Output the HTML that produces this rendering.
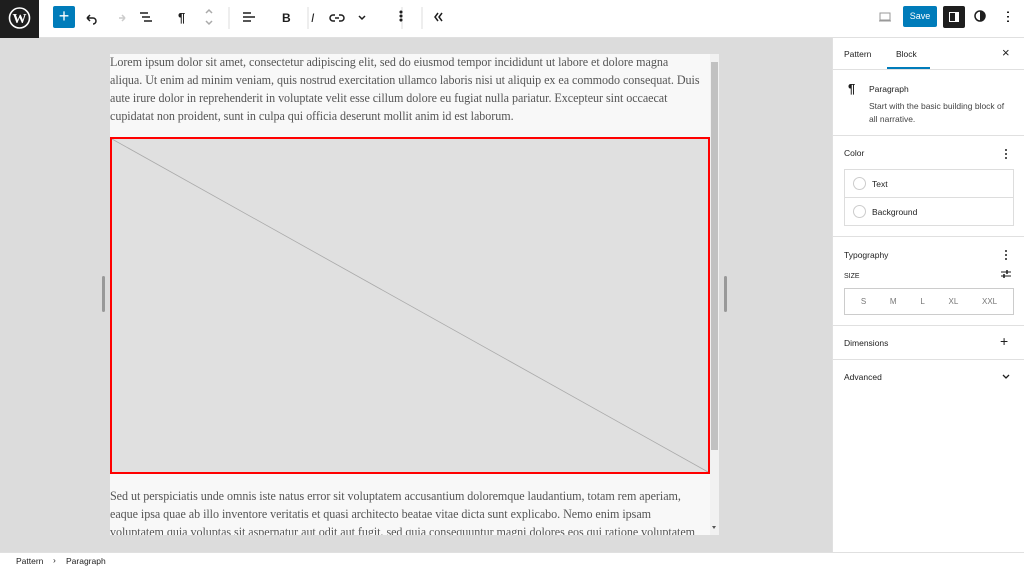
<!DOCTYPE html>
<html><head><style>
*{box-sizing:border-box;margin:0;padding:0}
body{width:1024px;height:568px;overflow:hidden;font-family:"Liberation Sans",sans-serif;background:#fff;position:relative;color:#1e1e1e}
.abs{position:absolute}
.top{left:0;top:0;width:1024px;height:38px;background:#fff;border-bottom:1px solid #e0e0e0}
.logo{left:0;top:0;width:39px;height:38px;background:#1e1e1e}
.canvas{left:0;top:38px;width:832px;height:514px;background:#dcdcdc}
.frame{left:110px;top:54px;width:609px;height:481px;background:#f8f8f8;overflow:hidden}
.txt{font-family:"Liberation Serif",serif;font-size:12.1px;line-height:18px;color:#555;width:600px;position:absolute;left:0;white-space:nowrap;letter-spacing:-0.05px}
.side{left:832px;top:38px;width:192px;height:514px;background:#fff;border-left:1px solid #e0e0e0}
.foot{left:0;top:552px;width:1024px;height:16px;background:#fff;border-top:1px solid #e0e0e0;font-size:8.5px;color:#1e1e1e}
.s{font-size:8.5px;color:#1e1e1e}
.hr{height:1px;background:#e0e0e0;left:0;width:192px}
</style></head><body>
<div class="abs top"></div>
<div class="abs logo"><svg width="39" height="38"><circle cx="19.5" cy="18" r="10" fill="none" stroke="#fff" stroke-width="1.6"/><text x="19.5" y="23" font-family="Liberation Serif" font-size="14" font-weight="bold" fill="#fff" text-anchor="middle">W</text></svg></div>
<div class="abs" style="left:53px;top:6px;width:22px;height:22px;background:#007cba;border-radius:2px;color:#fff;font-size:18px;line-height:21px;text-align:center">+</div>
<svg class="abs" style="left:80px;top:6px" width="400" height="24" fill="none" stroke="#1e1e1e" stroke-width="1.5">
<path d="M7 12h6a3 3 0 0 1 0 6M7 12l3-3M7 12l3 3"/>
<path d="M45 12h-6M45 12l-3-3M45 12l-3 3" stroke="#ccc"/>
<path d="M60 7h8M62 11h8M64 15h8"/>
<text x="98" y="16" font-size="13" font-weight="bold" fill="#1e1e1e" stroke="none">¶</text>
<path d="M126 7l3-3 3 3M126 15l3 3 3-3" stroke="#aaa"/>
<path d="M149 1v22M228 1v22M322 1v22M342 1v22" stroke="#ddd" stroke-width="1"/>
<path d="M163 7h8M163 11h12M163 15h8"/>
<text x="202" y="16" font-size="12" font-weight="bold" fill="#1e1e1e" stroke="none">B</text>
<text x="231" y="16" font-size="12" font-style="italic" fill="#1e1e1e" stroke="none">I</text>
<path d="M255 9h-2a3 3 0 0 0 0 6h2M259 9h2a3 3 0 0 1 0 6h-2M255 12h4"/>
<path d="M279 10l3 3 3-3"/>
<circle cx="321" cy="6" r=".8" fill="#1e1e1e"/><circle cx="321" cy="10" r=".8" fill="#1e1e1e"/><circle cx="321" cy="14" r=".8" fill="#1e1e1e"/>
<path d="M358 7l-3 4 3 4M362 7l-3 4 3 4"/>
</svg>
<svg class="abs" style="left:878px;top:10px" width="14" height="14" fill="none" stroke="#999" stroke-width="1"><rect x="2" y="3" width="10" height="7"/><path d="M1 11h12"/></svg>
<div class="abs" style="left:903px;top:6px;width:34px;height:21px;background:#007cba;color:#fff;font-size:9px;line-height:21px;text-align:center;border-radius:2px">Save</div>
<div class="abs" style="left:943px;top:6px;width:22px;height:22px;background:#1e1e1e;border-radius:2px"><div style="margin:6px;width:10px;height:10px;border:1.5px solid #fff;border-right-width:4px"></div></div>
<svg class="abs" style="left:973px;top:9px" width="14" height="14"><circle cx="7" cy="7" r="5" fill="none" stroke="#1e1e1e" stroke-width="1.5"/><path d="M7 2a5 5 0 0 1 0 10z" fill="#1e1e1e"/></svg>
<div class="abs" style="left:1007px;top:10px;width:2px;height:14px;background:radial-gradient(circle,#1e1e1e 0.9px,transparent 1px) 0 0/2px 4.5px"></div>

<div class="abs canvas"></div>
<div class="abs" style="left:102px;top:276px;width:3px;height:36px;background:#999;border-radius:2px"></div>
<div class="abs" style="left:724px;top:276px;width:3px;height:36px;background:#999;border-radius:2px"></div>
<div class="abs frame">
<div class="txt" style="top:-1px">Lorem ipsum dolor sit amet, consectetur adipiscing elit, sed do eiusmod tempor incididunt ut labore et dolore magna<br>aliqua. Ut enim ad minim veniam, quis nostrud exercitation ullamco laboris nisi ut aliquip ex ea commodo consequat. Duis<br>aute irure dolor in reprehenderit in voluptate velit esse cillum dolore eu fugiat nulla pariatur. Excepteur sint occaecat<br>cupidatat non proident, sunt in culpa qui officia deserunt mollit anim id est laborum.</div>
<div class="abs" style="left:0;top:83px;width:600px;height:337px;background:#e0e0e0;border:2px solid #f00"><svg width="596" height="333" style="display:block"><line x1="0" y1="0" x2="596" y2="333" stroke="#aaa" stroke-width="0.8"/></svg></div>
<div class="txt" style="top:433px">Sed ut perspiciatis unde omnis iste natus error sit voluptatem accusantium doloremque laudantium, totam rem aperiam,<br>eaque ipsa quae ab illo inventore veritatis et quasi architecto beatae vitae dicta sunt explicabo. Nemo enim ipsam<br>voluptatem quia voluptas sit aspernatur aut odit aut fugit, sed quia consequuntur magni dolores eos qui ratione voluptatem</div>
<div class="abs" style="left:600px;top:0;width:9px;height:481px;background:#f1f1f1"></div>
<div class="abs" style="left:601px;top:8px;width:7px;height:388px;background:#c1c1c1"></div>
<div class="abs" style="left:602px;top:472px;width:0;height:0;border:2.5px solid transparent;border-top:3px solid #555"></div>
</div>

<div class="abs side">
<div class="abs s" style="left:11px;top:11px">Pattern</div>
<div class="abs s" style="left:63px;top:11px">Block</div>
<div class="abs" style="left:54px;top:29px;width:43px;height:2px;background:#007cba"></div>
<div class="abs" style="left:169px;top:7px;font-size:13px">×</div>
<div class="abs hr" style="top:31px"></div>
<div class="abs" style="left:15px;top:43px;font-size:13px;font-weight:bold">¶</div>
<div class="abs s" style="left:36px;top:46px">Paragraph</div>
<div class="abs s" style="left:36px;top:62px;line-height:13px;color:#444;width:142px">Start with the basic building block of all narrative.</div>
<div class="abs hr" style="top:97px"></div>
<div class="abs s" style="left:11px;top:110px">Color</div>
<div class="abs" style="left:172px;top:110px;width:2px;height:12px;background:radial-gradient(circle,#1e1e1e .8px,transparent .9px) 0 0/2px 4px"></div>
<div class="abs" style="left:11px;top:131px;width:170px;height:57px;border:1px solid #ddd"></div>
<div class="abs" style="left:11px;top:159px;width:170px;height:1px;background:#ddd"></div>
<div class="abs" style="left:20px;top:139px;width:13px;height:13px;border:1px solid #ccc;border-radius:50%"></div>
<div class="abs s" style="left:39px;top:141px">Text</div>
<div class="abs" style="left:20px;top:167px;width:13px;height:13px;border:1px solid #ccc;border-radius:50%"></div>
<div class="abs s" style="left:39px;top:169px">Background</div>
<div class="abs hr" style="top:198px"></div>
<div class="abs s" style="left:11px;top:212px">Typography</div>
<div class="abs" style="left:172px;top:211px;width:2px;height:12px;background:radial-gradient(circle,#1e1e1e .8px,transparent .9px) 0 0/2px 4px"></div>
<div class="abs" style="left:11px;top:235px;font-size:7px">SIZE</div>
<svg class="abs" style="left:167px;top:231px" width="12" height="10" stroke="#1e1e1e"><path d="M1 3h10M1 7h10"/><path d="M7 1v4M4 5v4" stroke-width="1.5"/></svg>
<div class="abs" style="left:11px;top:250px;width:170px;height:27px;border:1px solid #ccc;display:flex;justify-content:space-around;align-items:center;font-size:8px;color:#777;padding:0 4px"><span>S</span><span>M</span><span>L</span><span>XL</span><span>XXL</span></div>
<div class="abs hr" style="top:287px"></div>
<div class="abs s" style="left:11px;top:300px">Dimensions</div>
<div class="abs" style="left:167px;top:295px;font-size:14px">+</div>
<div class="abs hr" style="top:321px"></div>
<div class="abs s" style="left:11px;top:334px">Advanced</div>
<svg class="abs" style="left:168px;top:335px" width="10" height="8" fill="none" stroke="#1e1e1e" stroke-width="1.3"><path d="M2 2l3 3 3-3"/></svg>
</div>

<div class="abs foot"><span style="position:absolute;left:16px;top:3px">Pattern</span><span style="position:absolute;left:53px;top:2px">›</span><span style="position:absolute;left:66px;top:3px">Paragraph</span></div>
</body></html>
